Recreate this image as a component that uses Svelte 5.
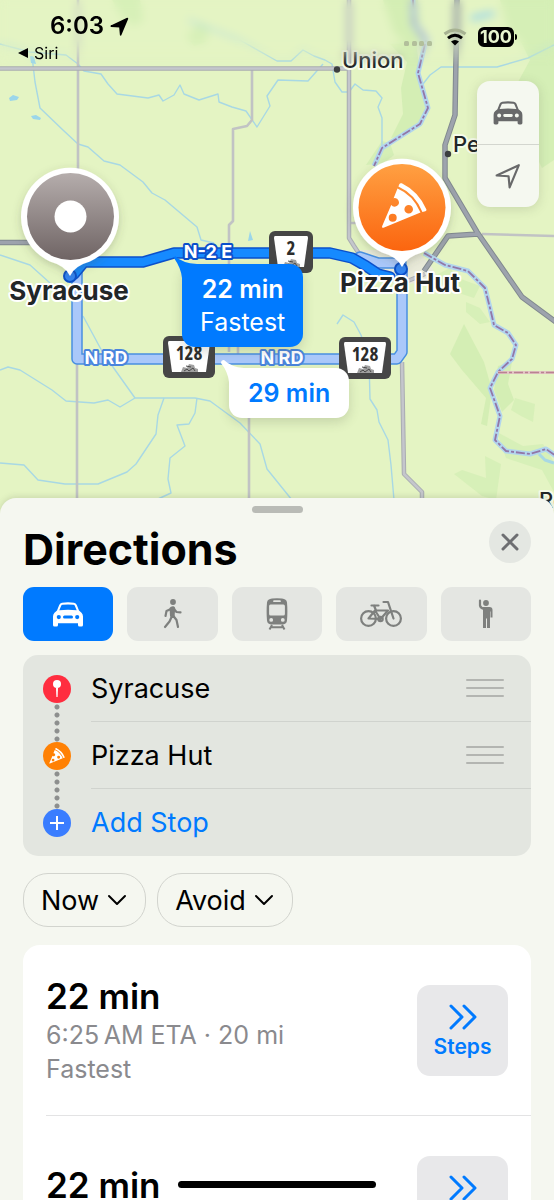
<script>
    let mode = 'drive';

    const modes = [
        { id: 'drive', label: 'Drive' },
        { id: 'walk', label: 'Walk' },
        { id: 'transit', label: 'Transit' },
        { id: 'cycle', label: 'Cycle' },
        { id: 'ride', label: 'Ride share' }
    ];

    const stops = [
        { name: 'Syracuse', kind: 'start' },
        { name: 'Pizza Hut', kind: 'food' }
    ];

    const filters = ['Now', 'Avoid'];

    const routes = [
        { time: '22 min', details: ['6:25\u202fAM ETA · 20 mi', 'Fastest'] },
        { time: '22 min', details: [] }
    ];
</script>

<svelte:head>
    <title>Directions</title>
</svelte:head>

<svg class="defs" width="0" height="0" aria-hidden="true">
    <symbol id="car" viewBox="0 0 30 25">
        <path
            fill-rule="evenodd"
            d="M4 8.500 6.200 2.900Q7 1 9 .7 15 0 21 .7 23 1 23.800 2.900L26 8.500 28.500 10.800Q30 12.200 30 14.500V23q0 1.500-1.500 1.500h-2Q25 24.500 25 23v-1.800H5V23q0 1.500-1.500 1.500h-2Q0 24.500 0 23v-8.500Q0 12.200 1.500 10.800ZM6.300 8.300Q15 7.400 23.700 8.300L21.800 3.800Q21.400 2.900 20.500 2.800 15 2.200 9.500 2.800 8.600 2.900 8.200 3.800ZM5.800 13a2.100 2.100 0 1 0 0 4.200 2.100 2.100 0 0 0 0-4.200ZM24.200 13a2.100 2.100 0 1 0 0 4.200 2.100 2.100 0 0 0 0-4.200ZM11.500 13.600a1.500 1.500 0 0 0 0 3h7a1.500 1.500 0 0 0 0-3Z"
        />
    </symbol>
    <symbol id="walk" viewBox="0 0 20 30">
        <circle cx="10" cy="3" r="2.900" />
        <path
            d="M9 9 8.500 17M9 9.500 3.500 12 2.500 17M10.500 9.500 13.500 13 17.500 13.400M9 17 6.500 22.500 2 28M10 16.500 13.500 21 15 28"
            fill="none"
            stroke="currentColor"
            stroke-width="2.200"
            stroke-linecap="round"
            stroke-linejoin="round"
        />
        <path d="M6.500 9Q8 6.800 10.500 7.200 12.200 7.800 12.200 9.500L11.500 18 7 17.500Z" />
    </symbol>
    <symbol id="transit" viewBox="0 0 22 32">
        <path
            fill-rule="evenodd"
            d="M1 4.500Q1.500 1 6 .6q5-.8 10 0 4.500.4 5 3.900.8 9 0 18-.4 3.700-4 3.900H5Q1.400 26.200 1 22.500q-.8-9 0-18ZM8 2.300a.8.8 0 0 0 0 1.700h6a.8.8 0 0 0 0-1.700ZM4.500 6.500Q3.200 6.600 3.100 8v8q.1 1.500 1.400 1.600h13q1.300-.1 1.400-1.600V8q-.1-1.400-1.400-1.500ZM5.200 20a1.900 1.900 0 1 0 0 3.800 1.900 1.900 0 0 0 0-3.800ZM16.800 20a1.900 1.900 0 1 0 0 3.800 1.900 1.900 0 0 0 0-3.800Z"
        />
        <path d="M6 27 3.500 31.500M16 27l2.500 4.500M5 29.200h12" fill="none" stroke="currentColor" stroke-width="2" />
    </symbol>
    <symbol id="cycle" viewBox="0 0 42 28">
        <g fill="none" stroke="currentColor" stroke-width="2.200" stroke-linecap="round" stroke-linejoin="round">
            <circle cx="8.500" cy="18.500" r="7.400" />
            <circle cx="33.500" cy="18.500" r="7.400" />
            <path d="M8.500 18.500 15 10.500H28L20.500 19ZM15 10.500 20.500 19M14 5.500 16 10.500M11.500 5.500h7M33.500 18.500 28 2H23.500" />
            <circle cx="20.500" cy="19" r="2.200" />
        </g>
    </symbol>
    <symbol id="ride" viewBox="0 0 16 30">
        <circle cx="8" cy="4" r="2.900" />
        <path d="M5 8H11.500Q14.500 8.200 14.500 11V18.500H12.500V12.500H12V29H9V19.500H8V29H5V12Z" />
        <path d="M2 1.500V6.500Q2.300 9 6.500 10" fill="none" stroke="currentColor" stroke-width="2.200" stroke-linecap="round" />
    </symbol>
    <symbol id="arrow" viewBox="0 0 24 24">
        <path d="M1.500 11.500 22 2 13.500 22.500 12.500 12.200Z" stroke="currentColor" stroke-width="2" stroke-linejoin="round" />
    </symbol>
    <symbol id="pizza" viewBox="0 0 46 46">
        <path
            fill-rule="evenodd"
            d="M16.500 5.500Q32 12 39.500 29.500L2.500 44.700Q.6 45.200 1.100 43.300L10.200 22A4.300 4.300 0 1 0 12.600 15.200ZM27.700 22a4.300 4.300 0 1 0 0 8.600 4.300 4.300 0 0 0 0-8.600ZM11.700 30.700a4 4 0 1 0 0 8 4 4 0 0 0 0-8Z"
        />
        <path d="M17.400 3.500 18.300 1.200Q19-.3 20.800.3 37.500 8.500 45.300 26.300 45.800 27.700 44.300 28.200L41.400 28.900Q34 11 17.400 3.500Z" />
    </symbol>
</svg>

<main class="phone">
    <section class="map" aria-label="Map">
        <svg class="terrain" viewBox="0 0 554 520" preserveAspectRatio="xMidYMin slice" aria-hidden="true">
            <defs>
                <linearGradient id="gray-pin" x2="0" y2="1">
                    <stop offset="0" stop-color="#b5adac" />
                    <stop offset="1" stop-color="#6f6464" />
                </linearGradient>
                <linearGradient id="orange-pin" x2="0" y2="1">
                    <stop offset="0" stop-color="#ffa042" />
                    <stop offset="1" stop-color="#fb650f" />
                </linearGradient>
                <filter id="soft" x="-20%" y="-20%" width="140%" height="150%">
                    <feDropShadow dx="0" dy="3" stdDeviation="4" flood-color="#46503c" flood-opacity="0.25" />
                </filter>
            </defs>

            <rect width="554" height="520" fill="#e4f4c3" />

            <!-- woods -->
            <g fill="#cfecb0">
                <path d="M112 0h28l4 20-10 6-12-8ZM186 36l14-14 10 6-4 14-12 4Z" opacity="0.6" />
                <path d="M383 0h35l4 40-8 8-20-14ZM390 44l26-2 4 30 8 30-5 22-18 12-14 2 12-24-2-26 6-26Z" opacity="0.8" />
                <path d="M366 165l16-24 8 2 4 12-10 8ZM500 0h54v160l-12 8-12-24 4-40-16-22 12-22-10-20-12-10Z" opacity="0.7" />
                <path d="M450 354 464 324 484 362 492 390 487 426 481 424 486 398 462 370ZM498 366l14-4-4 22 6 16-12 12-8-22Z" opacity="0.8" />
                <path d="M515 398l20 6-2 18-12-6-10-6ZM485 456l16 8-5 36-14-4-28-22 8-4 24 8ZM497 432l26 14 20-2 11 18v30l-12-22-36-12Z" opacity="0.6" />
                <path d="M430 278l20-10 8 10 22 8-6 12-18-6ZM466 302l14 6 10 14-10 2-14-12Z" opacity="0.6" />
            </g>
            <path d="M358 250h58l14 14 8 14-28 6-40-8Z" fill="#e9ead9" />

            <!-- streams -->
            <g fill="none" stroke="#a8d8e4" stroke-width="1.400" stroke-linejoin="round">
                <path d="M0 44 30 52 66 55 78 64 84 71 101 74 108 84 117 94 148 98 159 95 163 101 174 95 180 85 184 94 199 100 218 94 219 102 232 107 246 111 257 127 270 106 267 96 278 80 308 81 323 64" />
                <path d="M32 56 35 82 40 108 64 131 78 144 88 147 104 161 120 165 143 182 152 193 165 200 197 227 201 240 214 243" />
                <path d="M188 20 240 40 277 61 291 61 303 50 314 56 325 60 332 64 335 82 342 92 349 92 355 84 363 90 376 91 382 98 378 107 382 118 382 148" />
                <path d="M0 255 30 265 50 283M83 316 103 353 135 398M0 370 8 367 20 370 36 380 52 390 66 401 94 403 108 400 120 407 135 398 195 398 210 401 240 423 260 444 267 469 292 500" />
                <path d="M164 398 158 415 156 434 136 464 127 472 98 484 65 484 38 480 24 465 0 463M197 398 195 413 189 424 177 425 185 446 170 458 168 479 171 493 158 499" />
                <path d="M337 324 343 315 354 322 361 335 369 360 370 399 377 410 379 422 388 440 391 465 394 500M423 84 430 75 441 67 497 67 528 58 554 45" />
                <path d="M539 454 545 460 554 463" stroke-width="3" />
            </g>
            <g fill="#9bd6ea">
                <path d="M9 98l4-3 6 2-2 3-7 1ZM31 116l5-1 5 3-1 2-7-1ZM30 56l4 1 2 7-5-1ZM250 231l3 9-5 1ZM470 16l22-5 4 4-24 6Z" />
            </g>

            <!-- roads -->
            <g fill="none" stroke-linejoin="round">
                <g stroke="#c1c3c4" stroke-width="2.600">
                    <path d="M78 0V180M77 364V500M252 70V120L247 126 233 129V221L229 225V352M249 400V500M238 345v14" />
                    <path d="M482 234 554 236M349 223h8" />
                </g>
                <g stroke="#a9acb1" stroke-width="4.500">
                    <path d="M0 68.500H350M349 0V238L354 246 366 264M402 362 404 474 422 492V505M405 282l20-8" />
                </g>
                <g stroke="#c4c6cc" stroke-width="2.500">
                    <path d="M0 68.500H350M349 0V238L354 246 366 264M402 362 404 474 422 492V505M405 282l20-8" />
                </g>
                <path d="M457 0 455 115 445 145V178L477 232 522 297 560 325M0 242.500H35M424 271 448 236 478 234" stroke="#81898f" stroke-width="5.500" />
                <path d="M457 0 455 115 445 145V178L477 232 522 297 560 325M0 242.500H35M424 271 448 236 478 234" stroke="#9da3ad" stroke-width="3.500" />
            </g>

            <!-- river with the state line on it -->
            <g fill="none" stroke-linejoin="round">
                <path
                    d="M413 0 414 24 426 40 418 73 428 108 420 124 382 148 374 166M424 253 445 265 468 271 485 288 490 308 494 325 508 333 516 345 512 359 498 372 490 388 500 416 495 440 506 451 530 454 546 449 556 456"
                    stroke="#b2d5ee"
                    stroke-width="5"
                />
                <path
                    d="M413 0 414 24 426 40 418 73 428 108 420 124 382 148 374 166M424 253 445 265 468 271 485 288 490 308 494 325 508 333 516 345 512 359 498 372 490 388 500 416 495 440 506 451 530 454 546 449 556 456"
                    stroke="#9277a8"
                    stroke-width="1.800"
                    stroke-dasharray="9 2 3 2"
                />
                <path d="M498 372.500H554" stroke="#e3c5c5" stroke-width="3" />
                <path d="M498 372.500H554" stroke="#b98391" stroke-width="1.500" stroke-dasharray="9 2 3 2" />
            </g>

            <!-- alternate route under the selected one -->
            <g fill="none" stroke-linejoin="round" stroke-linecap="round">
                <path d="M77 270V359H397L402 352V272M360 257 378 263 401 263" stroke="#488fe1" stroke-width="11.500" />
                <path d="M77 270V359H397L402 352V272M360 257 378 263 401 263" stroke="#aac8fa" stroke-width="8.500" />
                <path d="M74 274 84 262 105 262H143L174 253H312L330 253 352 258 366 266 378 274 390 277" stroke="#0b50cb" stroke-width="11.500" />
                <path d="M74 274 84 262 105 262H143L174 253H312L330 253 352 258 366 266 378 274 390 277" stroke="#168aff" stroke-width="8.500" />
            </g>
            <g fill="#3385f5" stroke="#0b50cb" stroke-width="2">
                <circle cx="70" cy="276" r="6" />
                <circle cx="401" cy="269" r="6" />
            </g>

            <g class="road-name selected" text-anchor="middle">
                <text x="208" y="258">N-2 E</text>
            </g>
            <g class="road-name" text-anchor="middle">
                <text x="106" y="364">N RD</text>
                <text x="282" y="364">N RD</text>
            </g>

            <!-- highway shields -->
            {#each [{ x: 269, y: 231, w: 44, n: '2' }, { x: 163, y: 336, w: 52, n: '128' }, { x: 339, y: 337, w: 52, n: '128' }] as s}
                <g transform="translate({s.x} {s.y})">
                    <rect width={s.w} height="42" rx="6" fill="#464646" />
                    <path d="M6 5H{s.w - 6}Q{s.w - 5} 5 {s.w - 5} 7L{s.w - 9} 36H9L5 7Q5 5 6 5Z" fill="#fff" />
                    <path d="M{s.w / 2 - 8} 36l2-5 4 1 2-4 5 1 1 3 3 1v3Z" fill="#a0a0a0" />
                    <path d="M{s.w / 2 - 5} 35l3-2 2 2 4-3 2 3M{s.w / 2 - 3} 30l5 1" fill="none" stroke="#4a4a4a" />
                    <text class="shield" x={s.w / 2} y="24" text-anchor="middle">{s.n}</text>
                </g>
            {/each}

            <g fill="#3c3f3f">
                <circle cx="337" cy="69.500" r="3.200" />
                <circle cx="448" cy="154" r="3.200" />
            </g>
            <g class="town">
                <text x="342" y="68">Union</text>
                <text x="453" y="152">Peru</text>
                <text x="539" y="508">Ro</text>
            </g>

            <!-- pins -->
            <g filter="url(#soft)" fill="#fff">
                <path d="M70 276Q66 266 50 261.500A49 49 0 1 1 90 261.500Q74 266 70 276Z" />
                <path d="M402 267Q398 257 382 252.500A49 49 0 1 1 422 252.500Q406 257 402 267Z" />
            </g>
            <circle cx="70.500" cy="216.500" r="43.500" fill="url(#gray-pin)" />
            <circle cx="70.500" cy="216.500" r="16" fill="#fff" />
            <circle cx="402" cy="207.500" r="43.500" fill="url(#orange-pin)" />
            <use href="#pizza" x="381" y="183" width="46" height="46" fill="#fff" />

            <g class="place" text-anchor="middle">
                <text x="69" y="300">Syracuse</text>
                <text x="400" y="292">Pizza Hut</text>
            </g>
        </svg>

        <div class="haze"></div>

        <button class="callout fastest">
            <svg width="24" height="30" viewBox="0 0 24 30" aria-hidden="true"><path d="M1 0Q8 7 23 8L8 30V22Q7 12 0 2Z" /></svg>
            <strong>22 min</strong>
            <span>Fastest</span>
        </button>
        <button class="callout other">
            <svg width="24" height="30" viewBox="0 0 24 30" aria-hidden="true"><path d="M3 0Q10 7 23 8L8 30V22Q7 12 0 3Q0 0 3 0Z" /></svg>
            <strong>29 min</strong>
        </button>

        <div class="controls">
            <button aria-label="Map mode"><svg width="30" height="24"><use href="#car" /></svg></button>
            <button aria-label="My location"><svg class="outline" width="26" height="26"><use href="#arrow" /></svg></button>
        </div>
    </section>

    <header class="status">
        <div class="clock">
            <div class="time">6:03 <svg width="19" height="19"><use href="#arrow" /></svg></div>
            <a class="back" href="#siri"><svg width="10" height="10" viewBox="0 0 10 10" aria-hidden="true"><path d="M10 0V10L0 5Z" /></svg> Siri</a>
        </div>
        <div class="signals">
            <svg class="cell" width="28" height="6" viewBox="0 0 28 6" aria-label="No signal">
                {#each [0, 8, 15, 23] as x}
                    <rect {x} y="1" width="5" height="5" rx="1.500" />
                {/each}
            </svg>
            <svg class="wifi" width="24" height="18" viewBox="0 0 24 18" aria-label="Wi-Fi">
                <path d="M1.500 6Q12-2 22.500 6" stroke="#a7b292" />
                <path d="M5 10.200Q12 4.200 19 10.200" stroke="#000" />
                <path class="base" d="M12 17.500 8 13.500Q12 10.500 16 13.500Z" />
            </svg>
            <span class="battery">100</span>
        </div>
    </header>

    <section class="sheet">
        <div class="handle"></div>
        <div class="heading">
            <h1>Directions</h1>
            <button class="close" aria-label="Close">
                <svg width="18" height="18" viewBox="0 0 18 18"><path d="M2 2 16 16M16 2 2 16" /></svg>
            </button>
        </div>

        <div class="modes">
            {#each modes as m}
                <button class:active={mode === m.id} aria-label={m.label} on:click={() => (mode = m.id)}>
                    <svg class={m.id}>
                        <use href={m.id === 'drive' ? '#car' : '#' + m.id} />
                    </svg>
                </button>
            {/each}
        </div>

        <ul class="stops">
            {#each stops as stop}
                <li>
                    <span class="dot {stop.kind}">
                        {#if stop.kind === 'start'}
                            <svg width="10" height="20" viewBox="0 0 10 20"><circle cx="5" cy="5" r="4" /><path d="M4 9H6L5.600 18H4.400Z" /></svg>
                        {:else}
                            <svg width="16" height="16"><use href="#pizza" /></svg>
                        {/if}
                    </span>
                    <span class="line">
                        {stop.name}
                        <button class="grip" aria-label="Move {stop.name}"><i></i><i></i><i></i></button>
                    </span>
                </li>
            {/each}
            <li>
                <span class="dot plus">
                    <svg width="16" height="16" viewBox="0 0 16 16"><path d="M8 1V15M1 8H15" stroke="#fff" stroke-width="2" /></svg>
                </span>
                <button class="line add">Add Stop</button>
            </li>
        </ul>

        <div class="filters">
            {#each filters as filter}
                <button>
                    {filter}
                    <svg width="20" height="12" viewBox="0 0 20 12"><path d="M2 2 10 10 18 2" /></svg>
                </button>
            {/each}
        </div>

        <div class="routes">
            {#each routes as route}
                <article>
                    <div class="info">
                        <h2>{route.time}</h2>
                        {#each route.details as detail}
                            <p>{detail}</p>
                        {/each}
                    </div>
                    <button class="steps">
                        <svg width="28" height="26" viewBox="0 0 28 26"><path d="M2 2 13 13 2 24M15 2 26 13 15 24" /></svg>
                        Steps
                    </button>
                </article>
            {/each}
        </div>
    </section>

    <div class="home"></div>
</main>

<style>
    :global(body) {
        margin: 0;
    }

    .phone {
        position: relative;
        height: 100vh;
        overflow: hidden;
        background: #f5f7f0;
        color: #000;
        font-family: Inter, 'Liberation Sans', sans-serif;
    }

    .defs {
        position: absolute;
    }

    button {
        margin: 0;
        padding: 0;
        border: none;
        background: none;
        color: inherit;
        font: inherit;
        cursor: pointer;
    }

    svg {
        display: block;
        fill: currentColor;
    }

    .map {
        position: relative;
        height: 520px;
        margin-bottom: -22px;
        overflow: hidden;
    }

    .terrain {
        width: 100%;
        height: 100%;
    }

    .haze {
        position: absolute;
        inset: 0 0 auto;
        height: 66px;
        backdrop-filter: blur(4px);
        mask-image: linear-gradient(#000 60%, transparent);
    }

    .road-name {
        fill: #fff;
        stroke: #4a85dd;
        stroke-width: 4px;
        stroke-linejoin: round;
        paint-order: stroke;
        font-size: 18px;
        font-weight: 700;
    }

    .road-name.selected {
        stroke: #0b50cb;
    }

    .shield {
        fill: #2c2c2c;
        font-family: 'Open Sans', sans-serif;
        font-stretch: condensed;
        font-size: 19px;
        font-weight: 700;
    }

    .town,
    .place {
        fill: #222628;
        stroke: #f6fbe9;
        stroke-width: 4px;
        stroke-linejoin: round;
        paint-order: stroke;
    }

    .town {
        font-size: 22px;
        font-weight: 500;
    }

    .place {
        stroke: #fff;
        font-size: 26px;
        font-weight: 700;
    }

    .callout {
        position: absolute;
        display: flex;
        flex-direction: column;
        align-items: center;
        border-radius: 13px;
        font-size: 25px;
        line-height: 33px;
        box-shadow: 0 4px 12px rgba(70, 80, 60, 0.2);
    }

    .callout svg {
        position: absolute;
        top: -8px;
        left: -8px;
    }

    .callout strong {
        font-weight: 600;
    }

    .fastest {
        top: 264px;
        left: 182px;
        padding: 9px 18px 8px;
        background: #007aff;
        color: #fff;
    }

    .fastest svg {
        fill: #007aff;
    }

    .other {
        top: 368px;
        left: 229px;
        padding: 9px 19px 8px;
        background: #fff;
        color: #007aff;
    }

    .other svg {
        fill: #fff;
    }

    .controls {
        position: absolute;
        top: 81px;
        right: 15px;
        display: flex;
        flex-direction: column;
        width: 62px;
        border-radius: 13px;
        background: #f5f8f0;
        color: #68696a;
        box-shadow: 0 2px 12px rgba(70, 80, 60, 0.18);
    }

    .controls button {
        display: grid;
        place-items: center;
        height: 63px;
    }

    .controls button + button {
        border-top: 1px solid #d3d6cf;
    }

    .outline {
        fill: none;
    }

    .status {
        position: absolute;
        inset: 0 0 auto;
        display: flex;
        justify-content: space-between;
        padding: 11px 40px 0 18px;
    }

    .time {
        display: flex;
        align-items: center;
        gap: 6px;
        padding-left: 32px;
        font-size: 24px;
        font-weight: 600;
        line-height: 30px;
    }

    .back {
        display: flex;
        align-items: center;
        gap: 6px;
        color: #000;
        font-size: 16px;
        line-height: 24px;
        text-decoration: none;
    }

    .signals {
        display: flex;
        align-items: center;
        gap: 11px;
        height: 52px;
    }

    .cell {
        align-self: flex-end;
        margin-bottom: 17px;
        fill: #b2bf9b;
    }

    .wifi {
        fill: none;
        stroke-width: 3px;
    }

    .base {
        fill: #000;
    }

    .battery {
        position: relative;
        padding: 0 2px;
        border-radius: 6px;
        background: #000;
        color: #e8f5cf;
        font-size: 18px;
        font-weight: 700;
        line-height: 20px;
    }

    .battery::after {
        content: '';
        position: absolute;
        top: 7px;
        right: -3px;
        width: 2px;
        height: 6px;
        border-radius: 0 2px 2px 0;
        background: #000;
    }

    .sheet {
        position: relative;
        padding: 8px 23px 0;
        border-radius: 16px 16px 0 0;
        background: #f5f7f0;
        box-shadow: 0 -1px 6px rgba(70, 80, 60, 0.18);
    }

    .handle {
        width: 51px;
        height: 7px;
        margin: 0 auto 8px;
        border-radius: 4px;
        background: #b9bbb6;
    }

    .heading {
        display: flex;
        align-items: flex-start;
        justify-content: space-between;
        height: 66px;
    }

    h1 {
        margin: 0;
        font-size: 43px;
        font-weight: 700;
        line-height: 56px;
    }

    .close {
        display: grid;
        place-items: center;
        width: 42px;
        height: 42px;
        border-radius: 50%;
        background: #e4e7e2;
    }

    .close path {
        stroke: #6d6e71;
        stroke-width: 3;
        stroke-linecap: round;
    }

    .modes {
        display: grid;
        grid-template-columns: repeat(5, 1fr);
        gap: 14px;
    }

    .modes button {
        display: grid;
        place-items: center;
        height: 54px;
        border-radius: 11px;
        background: #e4e6e2;
        color: #7e807e;
    }

    .modes button.active {
        background: #007aff;
        color: #fff;
    }

    .drive {
        width: 30px;
        height: 25px;
    }

    .walk {
        width: 20px;
        height: 30px;
    }

    .transit {
        width: 22px;
        height: 32px;
    }

    .cycle {
        width: 42px;
        height: 28px;
    }

    .ride {
        width: 16px;
        height: 30px;
    }

    .stops {
        margin: 14px 0 17px;
        padding: 0;
        border-radius: 15px;
        background: #e3e6e0;
        list-style: none;
        font-size: 27px;
    }

    .stops li {
        position: relative;
        display: flex;
        align-items: center;
        gap: 20px;
        height: 67px;
        padding-left: 20px;
    }

    /* dotted connector down to the next stop */
    .stops li:not(:last-child)::after {
        content: '';
        position: absolute;
        top: 48px;
        left: 31px;
        width: 6px;
        height: 40px;
        background: radial-gradient(circle, #8d8f8e 2px, transparent 3px) 0 0 / 6px 8px;
    }

    .dot {
        display: grid;
        place-items: center;
        width: 28px;
        height: 28px;
        border-radius: 50%;
        color: #fff;
    }

    .start {
        background: #ff2d3f;
    }

    .food {
        background: #ff8104;
    }

    .plus {
        background: #3a7dff;
    }

    .line {
        display: flex;
        flex: 1;
        align-items: center;
        justify-content: space-between;
        height: 66px;
        padding-right: 27px;
        border-bottom: 1px solid #d0d3ce;
    }

    .add {
        border: none;
        color: #007aff;
    }

    .grip {
        display: grid;
        gap: 6px;
        width: 38px;
    }

    .grip i {
        height: 2px;
        border-radius: 1px;
        background: #b3b5b1;
    }

    .filters {
        display: flex;
        gap: 11px;
    }

    .filters button {
        display: flex;
        align-items: center;
        gap: 8px;
        height: 54px;
        padding: 0 18px 0 17px;
        border: 1px solid #d2d4ce;
        border-radius: 25px;
        font-size: 27px;
    }

    .filters path {
        fill: none;
        stroke: #000;
        stroke-width: 2;
        stroke-linecap: round;
        stroke-linejoin: round;
    }

    .routes {
        margin-top: 18px;
        border-radius: 17px;
        background: #fff;
    }

    article {
        display: flex;
        align-items: center;
        justify-content: space-between;
        height: 170px;
        margin-left: 23px;
        padding-right: 23px;
        border-bottom: 1px solid #e3e3e4;
    }

    .info {
        min-height: 76px;
    }

    h2 {
        margin: 0;
        font-size: 35px;
        font-weight: 600;
        line-height: 44px;
    }

    p {
        margin: 0;
        color: #8a8a8e;
        font-size: 25px;
        line-height: 34px;
    }

    .steps {
        display: flex;
        flex-direction: column;
        align-items: center;
        justify-content: center;
        gap: 4px;
        width: 91px;
        height: 91px;
        padding-top: 3px;
        box-sizing: border-box;
        border-radius: 13px;
        background: #e8e8ea;
        color: #007aff;
        font-size: 21px;
        font-weight: 600;
        line-height: 26px;
    }

    .steps path {
        fill: none;
        stroke: #007aff;
        stroke-width: 3;
        stroke-linecap: round;
        stroke-linejoin: round;
    }

    .home {
        position: absolute;
        bottom: 12px;
        left: 50%;
        width: 198px;
        height: 7px;
        border-radius: 4px;
        background: #000;
        transform: translateX(-50%);
    }
</style>
